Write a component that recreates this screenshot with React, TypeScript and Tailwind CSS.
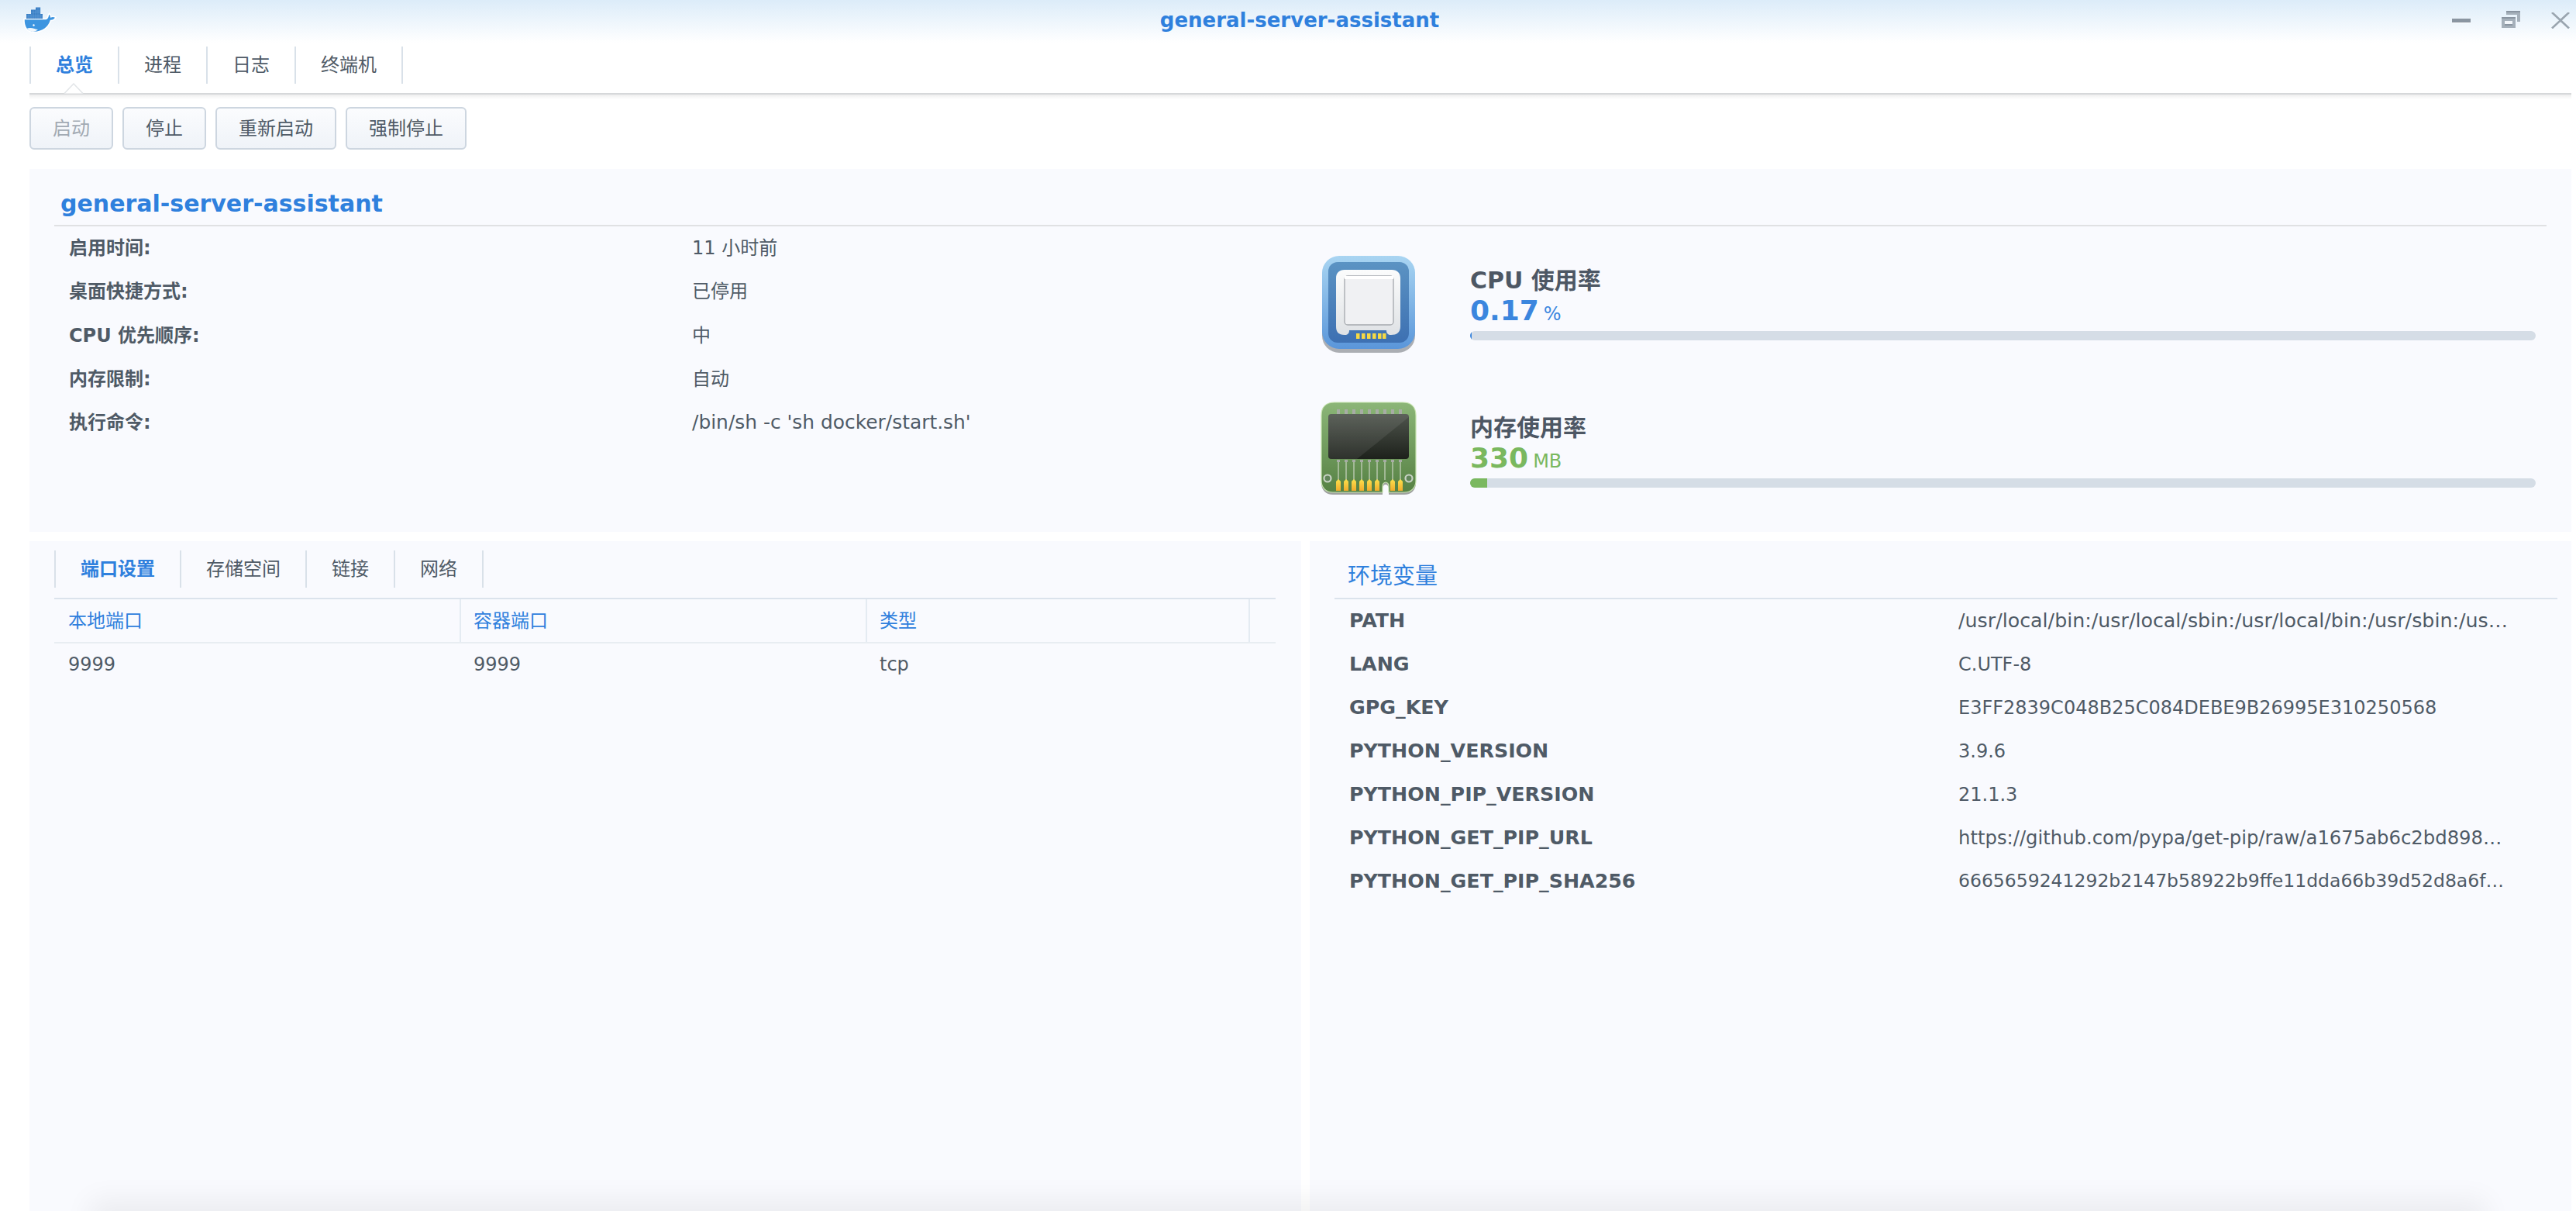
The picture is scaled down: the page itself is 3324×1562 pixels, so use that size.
import React from "react";

const FONT = "font-['DejaVu_Sans','Noto_Sans_CJK_SC',sans-serif]";

const infoRows = [
    { label: "启用时间:", value: "11 小时前" },
    { label: "桌面快捷方式:", value: "已停用" },
    { label: "CPU 优先顺序:", value: "中" },
    { label: "内存限制:", value: "自动" },
    { label: "执行命令:", value: "/bin/sh -c 'sh docker/start.sh'", valueClass: "text-[24.900px]" },
];

const envRows = [
    { label: "PATH", value: "/usr/local/bin:/usr/local/sbin:/usr/local/bin:/usr/sbin:/usr/bin:/sbin:/bin", valueClass: "text-[25.300px]" },
    { label: "LANG", value: "C.UTF-8" },
    { label: "GPG_KEY", value: "E3FF2839C048B25C084DEBE9B26995E310250568" },
    { label: "PYTHON_VERSION", value: "3.9.6" },
    { label: "PYTHON_PIP_VERSION", value: "21.1.3" },
    { label: "PYTHON_GET_PIP_URL", value: "https://github.com/pypa/get-pip/raw/a1675ab6c2bd898ed82b1f58c486097f763c74a9/public/get-pip.py", valueClass: "text-[24.300px]" },
    { label: "PYTHON_GET_PIP_SHA256", value: "6665659241292b2147b58922b9ffe11dda66b39d52d8a6f3aa310bc1d60ea6f7", valueClass: "text-[23.500px]" },
];

const mainTabs = [
    { label: "总览", width: "w-[116px]" },
    { label: "进程", width: "w-[114px]" },
    { label: "日志", width: "w-[114px]" },
    { label: "终端机", width: "w-[138px]" },
];

function DockerLogo() {
    return (
        <svg width="46" height="34" viewBox="0 0 46 34" className="mt-[9px] ml-[29px]">
            <path
                d="M2 15.5h28c1.500-.4 2.600-1.500 3-3.600.3-1.500 1-3.200 1.600-3.600.8.8 1.900 2.600 2.100 4.400 1.700-.6 4-.5 6.300.7-1.100 2.600-3.300 4-6.500 4.200C34 26 26.500 32.500 15 32.500 6 32.500 1.500 26 2 15.500z"
                fill="#3d95e0"
                stroke="#ffffff"
                strokeWidth="1.600"
            />
            <path d="M6 27.500c3-.8 6-.8 9.500.6 1.500.6 3 1 4.500 1-2 2-4.500 2.800-7 2.800-3 0-5.500-1.700-7-4.400z" fill="#f1f7fc" />
            <circle cx="14.500" cy="23.500" r="1.200" fill="#ffffff" />
            <path d="M5 9h6V3.500h6V0.500h6v8.500h3v6H5z" fill="#3b7fc4" />
            <path d="M5 11h21M5 13h21M8 9v6M11 9v6M14 3.500V15M17 3.500V15M20 0.500V15M23 0.500V15M17 5h6M17 7h6M11 7h6" stroke="#6aa5dc" strokeWidth="0.500" />
        </svg>
    );
}

function WindowControls() {
    return (
        <div className="flex items-start mr-[8px] mt-[14px]">
            <svg width="24" height="8" viewBox="0 0 24 8" className="mt-[10px]">
                <rect width="24" height="5" fill="#8a95a1" />
                <rect y="5" width="24" height="1" fill="#ffffff" />
            </svg>
            <svg width="24" height="23" viewBox="0 0 24 23" className="ml-[40px]">
                <path d="M6 0h18v14h-4V5H6z" fill="#a5b0ba" />
                <rect x="6" y="0" width="18" height="2" fill="#8a95a1" />
                <rect x="0" y="8" width="18" height="14" fill="#a5b0ba" />
                <rect x="0" y="8" width="18" height="2" fill="#8a95a1" />
                <rect x="4" y="13" width="10" height="6" fill="#f2f6fa" />
                <rect x="4" y="17" width="10" height="2" fill="#8a95a1" />
            </svg>
            <svg width="24" height="21" viewBox="0 0 24 21" className="ml-[40px] mt-[2px]">
                <path d="M1 0l22 20.500M23 0L1 20.500" stroke="#9aa5af" strokeWidth="2.600" />
            </svg>
        </div>
    );
}

function CpuIcon() {
    return (
        <svg width="120" height="128" viewBox="0 0 120 128" className="shrink-0">
            <defs>
                <linearGradient id="cpuOuter" x1="0" y1="0" x2="0" y2="1">
                    <stop offset="0" stopColor="#a9d5f2" />
                    <stop offset="1" stopColor="#5a96da" />
                </linearGradient>
                <linearGradient id="cpuInner" x1="0" y1="0" x2="0" y2="1">
                    <stop offset="0" stopColor="#5b93c3" />
                    <stop offset="1" stopColor="#3d70b2" />
                </linearGradient>
                <linearGradient id="cpuChip" x1="0" y1="0" x2="0" y2="1">
                    <stop offset="0" stopColor="#fbfcfc" />
                    <stop offset="1" stopColor="#dfe2e5" />
                </linearGradient>
            </defs>
            <rect x="0" y="5" width="120" height="120" rx="22" fill="#6b6f74" opacity="0.55" />
            <rect x="0" y="0" width="120" height="120" rx="22" fill="url(#cpuOuter)" />
            <rect x="8" y="8" width="104" height="104" rx="12" fill="url(#cpuInner)" />
            <path d="M29 18h61c7 0 11 4 11 11v62c0 8-5 11-12 11-4 0-6-2-6-6H35c0 4-2 6-6 6-8 0-11-4-11-11V29c0-7 4-11 11-11z" fill="url(#cpuChip)" />
            <rect x="29" y="26" width="63" height="63" rx="4" fill="#f0f1f3" stroke="#a4a8ad" strokeWidth="1.300" />
            <rect x="29" y="26" width="63" height="4" fill="#ffffff" />
            {[44, 51, 58, 65, 72, 78].map((x) => (
                <rect key={x} x={x} y="100" width="4.500" height="7" fill="#f6d944" />
            ))}
        </svg>
    );
}

function RamIcon() {
    const pins = [23, 33, 43, 53, 63, 73, 83, 93, 103];
    const outline = "M18 1h88c11 0 17 6 17 17v84c0 9-6 15-15 15H88v-8c0-3-2-5-4-5s-4 2-4 5v8H16c-9 0-15-6-15-15V18C1 7 7 1 18 1z";
    return (
        <svg width="124" height="122" viewBox="0 0 124 122" className="shrink-0 -ml-[2px] -mr-[2px] -mt-[2px]">
            <defs>
                <linearGradient id="ramBoard" x1="0" y1="0" x2="0" y2="1">
                    <stop offset="0" stopColor="#8cb678" />
                    <stop offset="1" stopColor="#568144" />
                </linearGradient>
                <linearGradient id="ramChip" x1="0" y1="0" x2="0" y2="1">
                    <stop offset="0" stopColor="#4f554d" />
                    <stop offset="1" stopColor="#1d211b" />
                </linearGradient>
                <linearGradient id="ramGold" x1="0" y1="0" x2="0" y2="1">
                    <stop offset="0" stopColor="#fbe14d" />
                    <stop offset="1" stopColor="#f2ac2c" />
                </linearGradient>
            </defs>
            <path d={outline} fill="#62655f" transform="translate(0 3)" opacity="0.6" />
            <path d={outline} fill="url(#ramBoard)" stroke="#c6e3ae" strokeWidth="1.200" />
            {pins.map((x) => (
                <g key={x}>
                    <rect x={x - 2} y="10" width="4" height="7" fill="#a7aca5" />
                    <rect x={x - 2} y="75" width="4" height="3" fill="#a7aca5" />
                    <rect x={x - 0.7} y="78" width="1.400" height="23" fill="#bccbb3" />
                </g>
            ))}
            <rect x="10" y="16" width="104" height="58" rx="4" fill="url(#ramChip)" />
            <path d="M10 20c0-2 2-4 4-4h96c2 0 4 2 4 4L47 74H14c-2 0-4-2-4-4z" fill="#ffffff" opacity="0.08" />
            {pins.filter((x) => x !== 83).map((x) => (
                <path key={x} d={`M${x - 3} 115V103l3-3 3 3v12z`} fill="url(#ramGold)" />
            ))}
            {[9, 114].map((cx) => (
                <circle key={cx} cx={cx} cy="99" r="4.500" fill="#61855a" stroke="#c8d2c4" strokeWidth="2.200" />
            ))}
        </svg>
    );
}

function Stat({ icon, title, value, unit, percent, color, barColor }: { icon: React.ReactNode; title: string; value: string; unit: string; percent: number; color: string; barColor: string }) {
    return (
        <div className="flex h-[120px] items-start">
            {icon}
            <div className="ml-[71px] flex-1 pt-[12px]">
                <div className="text-[30px] font-bold leading-[40px] text-[#4d5764]">{title}</div>
                <div className={`flex items-baseline h-[44px] leading-[44px] -mt-[3px] ${color}`}>
                    <span className="text-[36px] font-bold">{value}</span>
                    <span className="text-[24px] ml-[6px]">{unit}</span>
                </div>
                <div className="h-[12px] mt-[4px] rounded-[6px] bg-[#d5dde6] overflow-hidden">
                    <div className={`h-full ${barColor}`} style={{ width: `${percent}px` }} />
                </div>
            </div>
        </div>
    );
}

export default function App() {
    return (
        <div className={`relative h-[1562px] w-[3324px] overflow-hidden bg-white flex flex-col text-[24px] text-[#4f5a66] ${FONT}`}>
            {/* window header */}
            <div className="h-[55px] shrink-0 flex justify-between bg-gradient-to-b from-[#dcecf9] to-white relative">
                <DockerLogo />
                <div className="absolute inset-x-0 top-0 pl-[30px] text-center text-[26px] font-bold leading-[53px] text-[#2f80dd]">general-server-assistant</div>
                <WindowControls />
            </div>

            {/* main tabs */}
            <div className="relative shrink-0 ml-[38px] mr-[6px] mt-[5px] h-[62px] flex items-start border-b-2 border-[#d6d8da]">
                <div className="h-[48px] flex">
                    {mainTabs.map((tab, i) => (
                        <div
                            key={tab.label}
                            className={`h-full flex items-center justify-center border-r-2 border-[#d9e1e9] ${tab.width} ${i === 0 ? "font-bold text-[#2f80dd] border-l-2" : ""}`}
                        >
                            {tab.label}
                        </div>
                    ))}
                </div>
                <svg width="26" height="14" viewBox="0 0 26 14" className="absolute left-[44px] top-[47px]">
                    <path d="M1 13.500L13 1l12 12.500" fill="#ffffff" stroke="#e2e5e8" strokeWidth="1.500" />
                </svg>
                <div className="absolute inset-x-0 top-[62px] h-[6px] bg-gradient-to-b from-[#eeeeee] to-white" />
            </div>

            {/* actions */}
            <div className="shrink-0 ml-[38px] mt-[16px] flex gap-[12px]">
                {["启动", "停止", "重新启动", "强制停止"].map((label, i) => (
                    <button
                        key={label}
                        type="button"
                        className={`h-[55px] px-[28px] rounded-[6px] border-2 border-[#cdd6e0] bg-gradient-to-b from-[#fbfcfe] to-[#eff3f8] ${i === 0 ? "text-[#a2aab3]" : ""}`}
                    >
                        {label}
                    </button>
                ))}
            </div>

            {/* detail panel */}
            <div className="shrink-0 ml-[38px] mr-[6px] mt-[25px] h-[468px] bg-[#f9fafe] px-[32px]">
                <div className="h-[74px] border-b-2 border-[#e0e1e3] flex items-end pb-[5px] pl-[8px] text-[30px] font-bold text-[#2f80dd]">
                    general-server-assistant
                </div>
                <div className="flex">
                    <div className="w-[1636px] shrink-0 pl-[19px]">
                        {infoRows.map((row) => (
                            <div key={row.label} className="h-[56.250px] flex items-center">
                                <div className="w-[804px] font-bold">{row.label}</div>
                                <div className={row.valueClass}>{row.value}</div>
                            </div>
                        ))}
                    </div>
                    <div className="flex-1 pt-[38px] pr-[14px] flex flex-col gap-[70px]">
                        <Stat icon={<CpuIcon />} title="CPU 使用率" value="0.17" unit="%" percent={2} color="text-[#3b86de]" barColor="bg-[#3b86de]" />
                        <Stat icon={<RamIcon />} title="内存使用率" value="330" unit="MB" percent={22} color="text-[#7ab85f]" barColor="bg-[#7ab85f]" />
                    </div>
                </div>
            </div>

            {/* lower panels */}
            <div className="flex-1 ml-[38px] mr-[6px] mt-[12px] flex gap-[11px]">
                <div className="w-[1641px] bg-[#f9fafe] pl-[32px] pr-[33px] pt-[12px]">
                    <div className="h-[63px] border-b-2 border-[#dbe3ec]">
                        <div className="h-[48px] flex">
                            {["端口设置", "存储空间", "链接", "网络"].map((tab, i) => (
                                <div
                                    key={tab}
                                    className={`h-full px-[32px] flex items-center border-r-2 border-[#d9e1e9] ${i === 0 ? "font-bold text-[#2f80dd] border-l-2" : ""}`}
                                >
                                    {tab}
                                </div>
                            ))}
                        </div>
                    </div>
                    <div className="grid grid-cols-[525px_524px_494px_1fr] h-[57px] border-b-2 border-[#e8edf2] text-[#2f80dd]">
                        {["本地端口", "容器端口", "类型", ""].map((head, i) => (
                            <div key={i} className={`flex items-center pl-[16px] ${i < 3 ? "border-r-2 border-[#e4ebf2]" : ""} ${i === 0 ? "pl-[18px]" : ""}`}>
                                {head}
                            </div>
                        ))}
                    </div>
                    <div className="grid grid-cols-[525px_524px_494px_1fr] h-[54px]">
                        {["9999", "9999", "tcp"].map((cell, i) => (
                            <div key={i} className={`flex items-center pl-[16px] ${i === 0 ? "pl-[18px]" : ""}`}>
                                {cell}
                            </div>
                        ))}
                    </div>
                </div>
                <div className="flex-1 bg-[#f9fafe] pl-[32px] pr-[18px]">
                    <div className="h-[75px] border-b-2 border-[#dbe3ec] flex items-end pb-[6px] pl-[17px] text-[29px] text-[#2f80dd]">环境变量</div>
                    {envRows.map((row) => (
                        <div key={row.label} className="h-[56px] flex items-center pl-[19px]">
                            <div className="w-[786px] shrink-0 text-[25.300px] font-bold">{row.label}</div>
                            <div className={`w-[712px] truncate ${row.valueClass ?? ""}`}>{row.value}</div>
                        </div>
                    ))}
                </div>
            </div>

            {/* bottom fade */}
            <div className="pointer-events-none absolute left-[130px] right-[130px] -bottom-[24px] h-[24px] shadow-[0_0_36px_14px_rgba(0,0,0,0.06)]" />
        </div>
    );
}
